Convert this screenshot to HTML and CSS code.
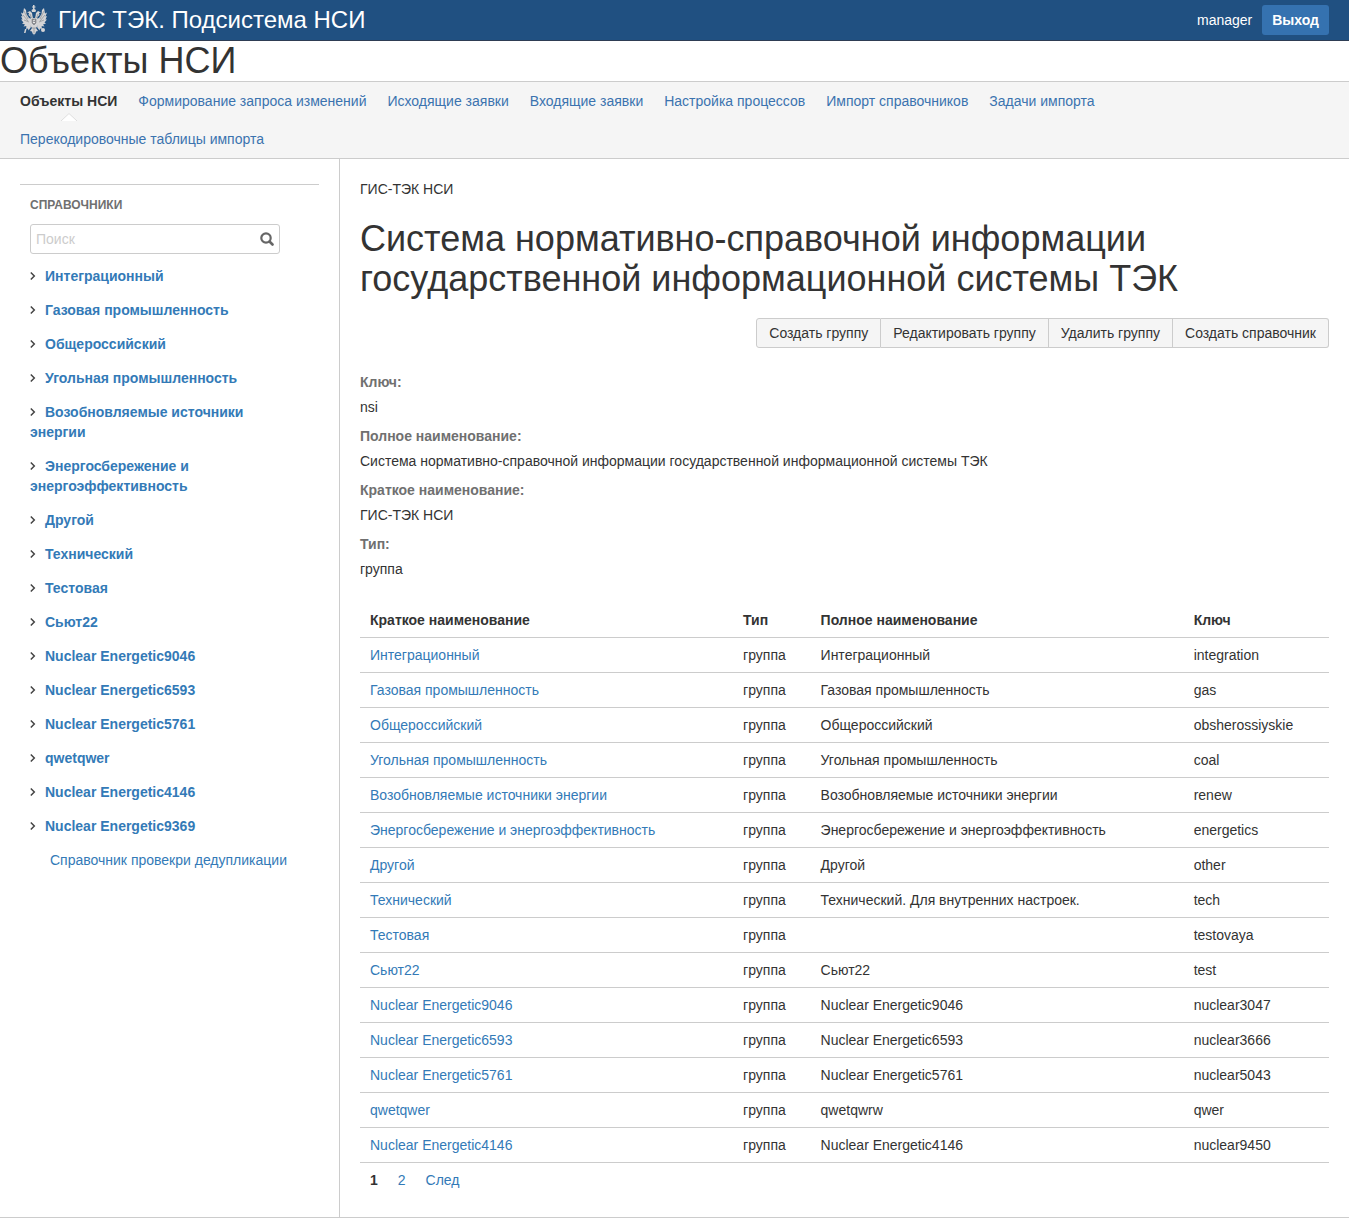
FILE: index.html
```html
<!DOCTYPE html>
<html lang="ru">
<head>
<meta charset="utf-8">
<title>Объекты НСИ</title>
<link rel="stylesheet" href="styles.css">
</head>
<body>
<header class="header">
  <a class="brand" href="#">
    <svg class="emblem" viewBox="0 0 28 32" aria-hidden="true">
      <g fill="#d4d4d6">
        <path d="M13 1h1.500v1.500H15.500v1H14.500V5l1.500 1-.5 2h-3.500L11.500 6 13 5V3.500H12v-1h1z"/>
        <path d="M12.500 12l-.5-3-2-2-3 1.500 2 .5-.5 2 2 2 1 4 2.500 2zM15.500 12l.5-3 2-2 3 1.500-2 .5.500 2-2 2-1 4-2.500 2z"/>
        <path d="M4 4l2 2 .5 4 2.500 4 3 1v6l-3 1-3 2 .5-2-3 .5 1.500-2-3-1 1.500-1L1 15.500h1.500L1 12l1.500.5L1 8.500l2 1z"/>
        <path d="M24 4l-2 2-.5 4-2.500 4-3 1v6l3 1 3 2-.5-2 3 .5-1.500-2 3-1-1.500-1 2.500-3h-1.500L27 12l-1.500.5L27 8.500l-2 1z"/>
        <path d="M11 14h6l1 7-2 3 2 3-2 .5-.5 2-1 .5-.5 1.500-.5-1.500-1-.5-.5-2L10 27l2-3-2-3z"/>
        <path d="M10 20l-3 2-1 3 2-.5.500 2L11 23zM18 20l3 2 1 3-2-.5-.5 2L17 23zM5 25h1.500l-1 4H4z"/>
        <circle cx="23" cy="26" r="2"/>
      </g>
      <g fill="none" stroke="#7c8187" stroke-width=".6">
        <path d="M4 7l4 8M3 11l5 6M4 16l5 2M24 7l-4 8M25 11l-5 6M24 16l-5 2M10 10l1.500 4M18 10l-1.500 4M12 24h4M14 24v5"/>
        <path d="M12 15h4v4l-2 2-2-2z" fill="#8d8e92"/>
      </g>
      <path d="M13 17l2-1M13 18.500h2" stroke="#fff" stroke-width=".8"/>
    </svg>
    <span>ГИС ТЭК. Подсистема НСИ</span>
  </a>
  <div class="account">
    <span>manager</span>
    <button class="logout" type="button">Выход</button>
  </div>
</header>
<h1 class="title">Объекты НСИ</h1>
<nav class="nav">
  <a class="nav-item nav-active" href="#">Объекты НСИ<svg class="notch" viewBox="0 0 16 8" aria-hidden="true"><path d="M0 8l8-8 8 8z" fill="#fff"/><path d="M0 8l8-7.500 8 7.500" fill="none" stroke="#ddd"/></svg></a>
  <a class="nav-item" href="#">Формирование запроса изменений</a>
  <a class="nav-item" href="#">Исходящие заявки</a>
  <a class="nav-item" href="#">Входящие заявки</a>
  <a class="nav-item" href="#">Настройка процессов</a>
  <a class="nav-item" href="#">Импорт справочников</a>
  <a class="nav-item" href="#">Задачи импорта</a>
  <a class="nav-item" href="#">Перекодировочные таблицы импорта</a>
</nav>
<div class="page">
  <aside class="sidebar">
    <div class="sidebar-inner">
      <h2 class="sidebar-title"><label for="search">Справочники</label></h2>
      <div class="search">
        <input id="search" class="search-input" type="text" placeholder="Поиск">
        <svg class="search-icon" viewBox="0 0 14 14" aria-hidden="true"><circle cx="6" cy="6" r="4.700" fill="none" stroke="#666" stroke-width="2.200"/><path d="M9.500 9.500l3 3" stroke="#666" stroke-width="2.600" stroke-linecap="round"/></svg>
      </div>
      <svg width="0" height="0" class="symbols" aria-hidden="true"><symbol id="chev" viewBox="0 0 15 10"><path d="M.8 1.500L4.300 5 .8 8.500" fill="none" stroke="#444" stroke-width="1.500"/></symbol></svg>
      <ul class="tree">
        <li><svg class="chev"><use href="#chev"/></svg><a href="#">Интеграционный</a></li>
        <li><svg class="chev"><use href="#chev"/></svg><a href="#">Газовая промышленность</a></li>
        <li><svg class="chev"><use href="#chev"/></svg><a href="#">Общероссийский</a></li>
        <li><svg class="chev"><use href="#chev"/></svg><a href="#">Угольная промышленность</a></li>
        <li><svg class="chev"><use href="#chev"/></svg><a href="#">Возобновляемые источники энергии</a></li>
        <li><svg class="chev"><use href="#chev"/></svg><a href="#">Энергосбережение и энергоэффективность</a></li>
        <li><svg class="chev"><use href="#chev"/></svg><a href="#">Другой</a></li>
        <li><svg class="chev"><use href="#chev"/></svg><a href="#">Технический</a></li>
        <li><svg class="chev"><use href="#chev"/></svg><a href="#">Тестовая</a></li>
        <li><svg class="chev"><use href="#chev"/></svg><a href="#">Сьют22</a></li>
        <li><svg class="chev"><use href="#chev"/></svg><a href="#">Nuclear Energetic9046</a></li>
        <li><svg class="chev"><use href="#chev"/></svg><a href="#">Nuclear Energetic6593</a></li>
        <li><svg class="chev"><use href="#chev"/></svg><a href="#">Nuclear Energetic5761</a></li>
        <li><svg class="chev"><use href="#chev"/></svg><a href="#">qwetqwer</a></li>
        <li><svg class="chev"><use href="#chev"/></svg><a href="#">Nuclear Energetic4146</a></li>
        <li><svg class="chev"><use href="#chev"/></svg><a href="#">Nuclear Energetic9369</a></li>
        <li class="leaf"><a href="#">Справочник провекри дедупликации</a></li>
      </ul>
    </div>
  </aside>
  <main class="main">
    <div class="crumbs">ГИС-ТЭК НСИ</div>
    <h2 class="heading">Система нормативно-справочной информации государственной информационной системы ТЭК</h2>
    <div class="toolbar">
      <button class="tool" type="button">Создать группу</button>
      <button class="tool" type="button">Редактировать группу</button>
      <button class="tool" type="button">Удалить группу</button>
      <button class="tool" type="button">Создать справочник</button>
    </div>
    <dl class="details">
      <dt>Ключ:</dt><dd>nsi</dd>
      <dt>Полное наименование:</dt><dd>Система нормативно-справочной информации государственной информационной системы ТЭК</dd>
      <dt>Краткое наименование:</dt><dd>ГИС-ТЭК НСИ</dd>
      <dt>Тип:</dt><dd>группа</dd>
    </dl>
    <table class="grid">
      <thead><tr><th class="col-name">Краткое наименование</th><th class="col-type">Тип</th><th class="col-name">Полное наименование</th><th>Ключ</th></tr></thead>
      <tbody>
        <tr><td><a href="#">Интеграционный</a></td><td>группа</td><td>Интеграционный</td><td>integration</td></tr>
        <tr><td><a href="#">Газовая промышленность</a></td><td>группа</td><td>Газовая промышленность</td><td>gas</td></tr>
        <tr><td><a href="#">Общероссийский</a></td><td>группа</td><td>Общероссийский</td><td>obsherossiyskie</td></tr>
        <tr><td><a href="#">Угольная промышленность</a></td><td>группа</td><td>Угольная промышленность</td><td>coal</td></tr>
        <tr><td><a href="#">Возобновляемые источники энергии</a></td><td>группа</td><td>Возобновляемые источники энергии</td><td>renew</td></tr>
        <tr><td><a href="#">Энергосбережение и энергоэффективность</a></td><td>группа</td><td>Энергосбережение и энергоэффективность</td><td>energetics</td></tr>
        <tr><td><a href="#">Другой</a></td><td>группа</td><td>Другой</td><td>other</td></tr>
        <tr><td><a href="#">Технический</a></td><td>группа</td><td>Технический. Для внутренних настроек.</td><td>tech</td></tr>
        <tr><td><a href="#">Тестовая</a></td><td>группа</td><td></td><td>testovaya</td></tr>
        <tr><td><a href="#">Сьют22</a></td><td>группа</td><td>Сьют22</td><td>test</td></tr>
        <tr><td><a href="#">Nuclear Energetic9046</a></td><td>группа</td><td>Nuclear Energetic9046</td><td>nuclear3047</td></tr>
        <tr><td><a href="#">Nuclear Energetic6593</a></td><td>группа</td><td>Nuclear Energetic6593</td><td>nuclear3666</td></tr>
        <tr><td><a href="#">Nuclear Energetic5761</a></td><td>группа</td><td>Nuclear Energetic5761</td><td>nuclear5043</td></tr>
        <tr><td><a href="#">qwetqwer</a></td><td>группа</td><td>qwetqwrw</td><td>qwer</td></tr>
        <tr><td><a href="#">Nuclear Energetic4146</a></td><td>группа</td><td>Nuclear Energetic4146</td><td>nuclear9450</td></tr>
      </tbody>
    </table>
    <div class="pager"><b>1</b><a href="#">2</a><a href="#">След</a></div>
  </main>
</div>
</body>
</html>
```
FILE: styles.css
```css
* { box-sizing: border-box; }
body {
  margin: 0;
  background: #fff;
  color: #333;
  font: 14px/20px "Liberation Sans", Arial, sans-serif;
}
a { color: #337ab7; text-decoration: none; }
a:hover { text-decoration: underline; }
button, input { font: inherit; }

.header {
  display: flex;
  align-items: center;
  justify-content: space-between;
  height: 41px;
  padding: 0 20px;
  background: #205081;
  border-bottom: 1px solid #2e3d54;
  color: #fff;
}
.brand {
  display: flex;
  align-items: center;
  gap: 10px;
  color: #fff;
  font-size: 24px;
}
.emblem { width: 28px; height: 32px; }
.account { display: flex; align-items: center; gap: 10px; }
.logout {
  height: 30px;
  padding: 0 10px;
  border: 0;
  border-radius: 3px;
  background: #3572b0;
  color: #fff;
  font-weight: bold;
}

.title { margin: 0; font-size: 36px; line-height: 40px; font-weight: normal; }

.nav {
  display: flex;
  flex-wrap: wrap;
  column-gap: 21px;
  padding: 0 20px;
  background: #f5f5f5;
  border-top: 1px solid #ccc;
  border-bottom: 1px solid #ccc;
}
.nav-item { padding: 9px 0; color: #3b73af; }
.nav-active { position: relative; color: #333; font-weight: bold; }
.notch {
  position: absolute;
  left: 50%;
  bottom: -1px;
  width: 16px;
  height: 8px;
  margin-left: -8px;
}

.page { display: flex; border-bottom: 1px solid #ccc; }
.sidebar {
  flex: none;
  width: 340px;
  padding: 25px 20px 20px;
  border-right: 1px solid #ccc;
}
.sidebar-inner { padding: 10px; border-top: 1px solid #ccc; }
.sidebar-title {
  margin: 0 0 9px;
  color: #707070;
  font-size: 12px;
  line-height: 20px;
  text-transform: uppercase;
}
.search { position: relative; width: 250px; max-width: 100%; }
.search-input {
  display: block;
  width: 100%;
  height: 30px;
  padding: 4px 30px 4px 5px;
  border: 1px solid #ccc;
  border-radius: 3px;
  color: #333;
}
.search-input::placeholder { color: #ccc; opacity: 1; }
.search-icon { position: absolute; top: 8px; right: 6px; width: 14px; height: 14px; }
.symbols { display: block; }
.tree { margin: 12px 0 0; padding: 0 10px 0 0; list-style: none; font-weight: bold; }
.tree li { margin-bottom: 14px; }
.chev { width: 15px; height: 10px; }
.tree .leaf { padding-left: 20px; font-weight: normal; }

.main { flex: 1; min-width: 0; padding: 20px 20px 27px; }
.heading { margin: 20px 0 19px; font-size: 36px; line-height: 40px; font-weight: normal; }
.toolbar { display: flex; justify-content: flex-end; }
.tool {
  height: 30px;
  padding: 0 12px;
  border: 1px solid #ccc;
  border-left-width: 0;
  background: #f5f5f5;
  color: #333;
}
.tool:first-child { border-left-width: 1px; border-radius: 3px 0 0 3px; }
.tool:last-child { border-radius: 0 3px 3px 0; }
.details { margin: 24px 0; }
.details dt { color: #707070; font-weight: bold; }
.details dd { margin: 5px 0 9px; }

.grid { width: 100%; border-collapse: separate; border-spacing: 0; table-layout: fixed; }
.grid th, .grid td {
  height: 35px;
  padding: 7px 10px;
  border-bottom: 1px solid #ccc;
  text-align: left;
}
.col-name { width: 38.5%; }
.col-type { width: 8%; }
.pager { display: flex; gap: 20px; padding: 7px 10px 0; }
```
